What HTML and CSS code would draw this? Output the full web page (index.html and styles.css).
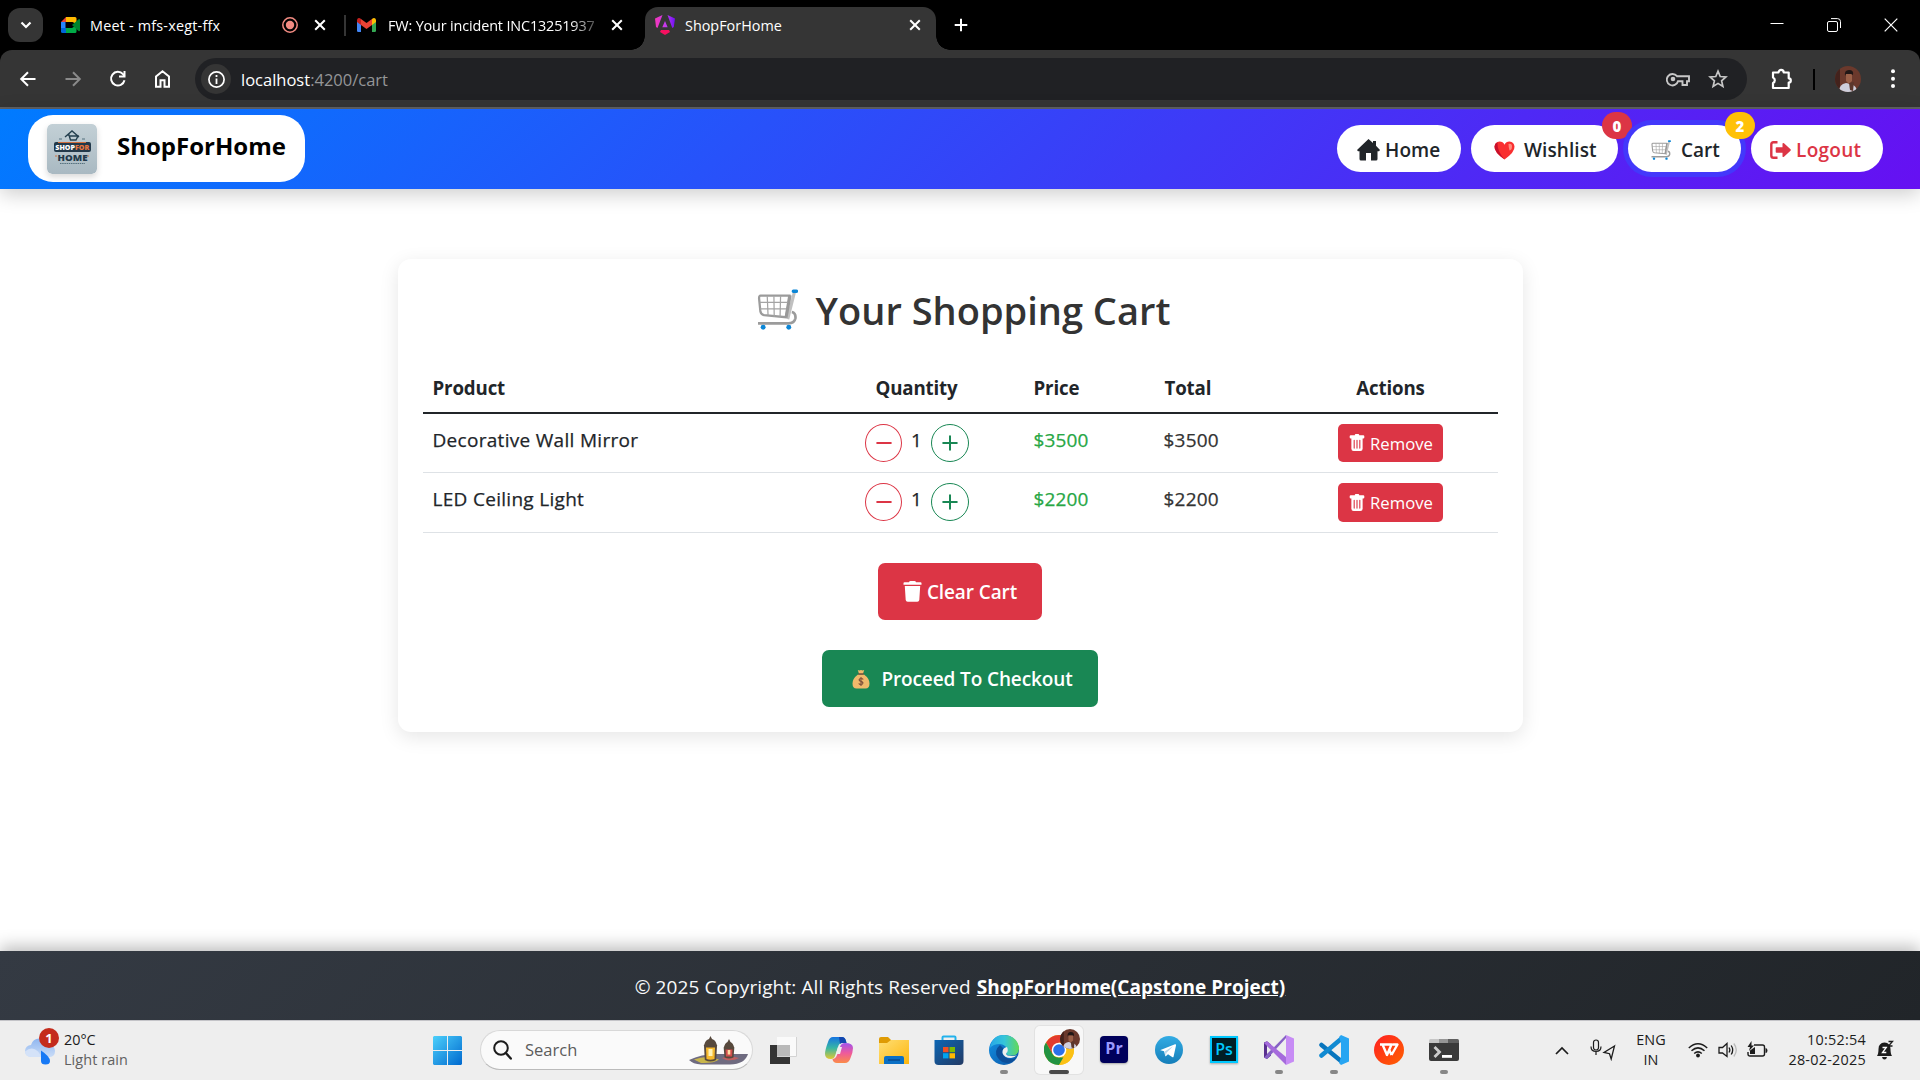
FILE: index.html
```html
<!DOCTYPE html>
<html lang="en">
<head>
<meta charset="utf-8">
<title>ShopForHome</title>
<link rel="stylesheet" href="styles.css">
</head>
<body>
<svg class="defs" aria-hidden="true">
  <defs>
    <symbol id="close" viewBox="0 0 20 20"><path d="M5.2 5.2l9.6 9.6M14.8 5.2l-9.6 9.6" stroke="currentColor" stroke-width="2" fill="none"/></symbol>
    <symbol id="cart" viewBox="0 0 40 40">
      <path d="M3.500 6.500h28l-3.500 21-21-2Q4 25 3.300 22L2 9q0-2.500 1.500-2.500z" fill="#fff" stroke="#9b9b9b" stroke-width="2.200"/>
      <path d="M10 7l.8 19M16.500 7l.3 20M23 7l-.5 20M2.500 13h28M3 19.500h26" stroke="#a4a4a4" stroke-width="1.200" fill="none"/>
      <path d="M36.500 3L30 29.500" stroke="#c0c0c0" stroke-width="3" fill="none"/>
      <path d="M32.500 6L28.500 28" stroke="#999" stroke-width="2.600" fill="none"/>
      <path d="M34 22.500q4 1 3.500 6-1 5-7 5H1" stroke="#9b9b9b" stroke-width="2.600" fill="none"/>
      <path d="M36 .5h2.400a1.700 1.700 0 010 3.400H35.500a1.700 1.700 0 010-3.400z" fill="#0c86d6"/>
      <circle cx="6" cy="37.300" r="2.400" fill="#0c86d6"/><circle cx="31" cy="37.300" r="2.400" fill="#0c86d6"/>
    </symbol>
    <symbol id="trash" viewBox="0 0 16 16"><path fill="#fff" d="M2.500 1a1 1 0 0 0-1 1v1a1 1 0 0 0 1 1H3v9a2 2 0 0 0 2 2h6a2 2 0 0 0 2-2V4h.5a1 1 0 0 0 1-1V2a1 1 0 0 0-1-1H10a1 1 0 0 0-1-1H7a1 1 0 0 0-1 1zm3 4a.5.5 0 0 1 .5.5v7a.5.5 0 0 1-1 0v-7a.5.5 0 0 1 .5-.5M8 5a.5.5 0 0 1 .5.5v7a.5.5 0 0 1-1 0v-7A.5.5 0 0 1 8 5m3 .5v7a.5.5 0 0 1-1 0v-7a.5.5 0 0 1 1 0"/></symbol>
    <symbol id="portrait" viewBox="0 0 26 26">
      <clipPath id="round"><circle cx="13" cy="13" r="13"/></clipPath>
      <g clip-path="url(#round)"><path fill="#6b392c" d="M0 0h26v26H0z"/><path fill="#43221c" d="M0 0h5v26H0z"/><path fill="#cfcfdc" d="M4 26q0-8 7-9l5 1q6 2 6 8z"/><path fill="#9a6048" d="M11 8h6v7l-3 3-3-3z"/><path fill="#211716" d="M10 10q-1-6 4-6t4 5l-2-1h-5z"/><path fill="#5b372c" d="M14 17l5-1-1 9-3-1z"/></g>
    </symbol>
    <linearGradient id="gBlue" x2="1" y2="1"><stop stop-color="#4cd0fb"/><stop offset="1" stop-color="#0069cf"/></linearGradient>
    <linearGradient id="gFolder" x2="1" y2="1"><stop stop-color="#ffdf75"/><stop offset="1" stop-color="#fdb60d"/></linearGradient>
    <linearGradient id="gStore" x2="1" y2="1"><stop stop-color="#0c66b4"/><stop offset="1" stop-color="#233a64"/></linearGradient>
    <linearGradient id="gEdge" x2="1"><stop stop-color="#28a8e8"/><stop offset=".5" stop-color="#35c5d9"/><stop offset="1" stop-color="#63d957"/></linearGradient>
    <linearGradient id="gEdgeB" x2="1" y2="1"><stop stop-color="#1394e6"/><stop offset="1" stop-color="#0b53a4"/></linearGradient>
    <linearGradient id="gCopA" y2="1" x2="0"><stop stop-color="#1674e2"/><stop offset=".5" stop-color="#37b7a4"/><stop offset="1" stop-color="#e3c832"/></linearGradient>
    <linearGradient id="gCopB" y2="1" x2="0"><stop stop-color="#a052ec"/><stop offset=".5" stop-color="#ee5a9c"/><stop offset="1" stop-color="#fb8b48"/></linearGradient>
    <linearGradient id="gTele" y2="1" x2="0"><stop stop-color="#33ace4"/><stop offset="1" stop-color="#157eb9"/></linearGradient>
    <linearGradient id="gWps" x2="1" y2="1"><stop stop-color="#ff1f22"/><stop offset="1" stop-color="#ff6200"/></linearGradient>
    <linearGradient id="gLogo" y2="1" x2="0"><stop stop-color="#c3d0d6"/><stop offset="1" stop-color="#a9b9c2"/></linearGradient>
    <linearGradient id="gNg" x2="1"><stop stop-color="#f637b8"/><stop offset=".55" stop-color="#c13af0"/><stop offset="1" stop-color="#6e10f5"/></linearGradient>
    <linearGradient id="gCloud" y2="1" x2="0"><stop stop-color="#8fb6f0"/><stop offset="1" stop-color="#c9dcf7"/></linearGradient>
  </defs>
</svg>

<header class="browser">
  <div class="tabstrip">
    <button class="tab-search"><svg width="16" height="16" viewBox="0 0 16 16"><path d="M3.500 5.500L8 10l4.500-4.500" stroke="#fff" stroke-width="2.200" fill="none"/></svg></button>
    <div class="tab tab-meet">
      <svg width="20" height="20" viewBox="0 0 20 20"><path fill="#2684fc" d="M0 7h4.500v6H0z"/><path fill="#ea4335" d="M0 7l5-5v5z"/><path fill="#ffba00" d="M5 2h9q1.500 0 1.500 1.500V9l-4-2H5z"/><path fill="#0066da" d="M0 13h5v5H1.500Q0 18 0 16.500z"/><path fill="#00ac47" d="M5 13h6l4.500-3v6.500q0 1.500-1.500 1.500H5z"/><path fill="#00832d" d="M11 10l7-6q1 0 1 1v10.500q-.5 1-1.500.5z"/></svg>
      <span class="tab-title">Meet - mfs-xegt-ffx</span>
      <svg class="rec" width="16" height="16" viewBox="0 0 16 16"><circle cx="8" cy="8" r="7.200" stroke="#f28b82" stroke-width="1.500" fill="none"/><circle cx="8" cy="8" r="4.200" fill="#f28b82"/></svg>
      <svg class="x" width="20" height="20"><use href="#close"/></svg>
    </div>
    <div class="tab tab-mail">
      <svg width="19" height="14" viewBox="0 0 19 14"><path fill="#4285f4" d="M0 2l4 3v9H1.200Q0 14 0 12.800z"/><path fill="#34a853" d="M15 5l4-3v10.800q0 1.200-1.200 1.200H15z"/><path fill="#fbbc04" d="M15 1l1-.7Q18.500-.5 19 2v2l-4 3z"/><path fill="#c5221f" d="M0 2Q.5-.5 3 .3L4 1v6L0 4z"/><path fill="#ea4335" d="M4 1l5.500 4L15 1v6l-5.500 4L4 7z"/></svg>
      <span class="tab-title fade">FW: Your incident INC13251937</span>
      <svg class="x" width="20" height="20"><use href="#close"/></svg>
    </div>
    <div class="tab tab-active">
      <svg width="20" height="20" viewBox="0 0 20 20"><path fill="url(#gNg)" d="M0 3.500L7.500 0 2.500 13 1 12zM12.500 0L20 3.500 18.800 12l-1.500 1zM10 6l2.700 6.300H7.300z"/><path fill="#f6105f" d="M6 15h8l1 2-5 3-5-3z"/></svg>
      <span class="tab-title">ShopForHome</span>
      <svg class="x" width="20" height="20"><use href="#close"/></svg>
    </div>
    <svg class="newtab" width="20" height="20" viewBox="0 0 20 20"><path d="M10 3.700v12.600M3.700 10h12.600" stroke="#fff" stroke-width="2"/></svg>
    <div class="window-controls">
      <svg width="14" height="14" viewBox="0 0 14 14"><path d="M.5 5.500h13" stroke="#fff"/></svg>
      <svg width="14" height="14" viewBox="0 0 14 14"><path d="M.5 5q0-1.500 1.500-1.500h7q1.500 0 1.500 1.500v7q0 1.500-1.500 1.500H2Q.5 13.500.5 12zM4 .6h6.500q3 0 3 3V10" stroke="#fff" fill="none"/></svg>
      <svg width="14" height="14" viewBox="0 0 14 14"><path d="M.7.7l12.600 12.600M13.300.7L.7 13.300" stroke="#fff" stroke-width="1.200"/></svg>
    </div>
  </div>
  <div class="toolbar">
    <div class="toolbar-nav">
      <svg width="20" height="20" viewBox="0 0 20 20"><path d="M17.500 10H3.500M10 3.200L3.200 10l6.800 6.800" stroke="#fff" stroke-width="2" fill="none"/></svg>
      <svg width="20" height="20" viewBox="0 0 20 20"><path d="M2.500 10h14M10 3.200l6.800 6.800-6.800 6.800" stroke="#8a8a8a" stroke-width="2" fill="none"/></svg>
      <svg width="20" height="20" viewBox="0 0 20 20"><path d="M16.500 11.200A6.800 6.800 0 1 1 15 5.200L16.500 7" stroke="#fff" stroke-width="2" fill="none"/><path d="M17.500 2v6.500H11v-2h4.500V2z" fill="#fff"/></svg>
      <svg width="20" height="20" viewBox="0 0 20 20"><path d="M3 7.500L9.500 2.300 16 7.500v10.200h-4.500v-6.500h-4v6.500H3z" stroke="#fff" stroke-width="2" fill="none"/></svg>
    </div>
    <div class="omnibox">
      <span class="site-info"><svg width="17" height="17" viewBox="0 0 17 17"><circle cx="8.500" cy="8.500" r="7.600" stroke="#fff" stroke-width="1.700" fill="none"/><path d="M8.500 7.500V13M8.500 4v2" stroke="#fff" stroke-width="1.800"/></svg></span>
      <span class="url">localhost<span>:4200/cart</span></span>
      <svg class="key" width="24" height="16" viewBox="0 0 24 16"><path d="M11 5.200h12v5h-2V14h-4.500v-3.800H12a5.700 5.700 0 1 1-1-5z" stroke="#c7c7c7" stroke-width="1.900" fill="none"/><circle cx="7" cy="8" r="2.300" fill="#c7c7c7"/></svg>
      <svg class="star" width="20" height="20" viewBox="0 0 20 20"><path d="M10 2.200l2.200 5.300 5.700.5-4.300 3.800 1.300 5.600L10 14.400l-4.900 3 1.300-5.600L2.100 8l5.700-.5z" stroke="#c7c7c7" stroke-width="1.700" fill="none"/></svg>
    </div>
    <svg class="ext" width="22" height="22" viewBox="0 0 22 22"><path d="M2 4.500h5.500a2.600 2.600 0 0 1 5.200 0h5v5.800a2 2 0 0 1 0 4.200v5.500H2v-5a3 3 0 0 0 0-5.500z" stroke="#fff" stroke-width="2.200" fill="none" stroke-linejoin="round"/></svg>
    <span class="toolbar-rule"></span>
    <svg class="profile" width="26" height="26"><use href="#portrait"/></svg>
    <svg class="menu" width="6" height="20" viewBox="0 0 6 20"><g fill="#fff"><circle cx="3" cy="2.300" r="2"/><circle cx="3" cy="9.700" r="2"/><circle cx="3" cy="17" r="2"/></g></svg>
  </div>
</header>

<nav class="navbar">
  <a class="brand">
    <svg class="logo" width="50" height="50" viewBox="0 0 50 50"><rect width="50" height="50" rx="5" fill="url(#gLogo)"/><path d="M18 13l7-6 7 6M20 11h2l1.500 5H29l2-4h-8" stroke="#25404f" stroke-width="1.400" fill="none"/><path d="M12 15h3M35 15h3" stroke="#54707d"/><path d="M8 32h2M40 32h2" stroke="#d06e3c"/><rect x="7" y="18" width="37" height="10" rx="2" fill="#22394a"/><path d="M11 18.500h28" stroke="#d06e3c"/><text x="8.300" y="25.800" font-size="7.200" textLength="34" lengthAdjust="spacingAndGlyphs" fill="#fff">SHOP<tspan fill="#e8763e">FOR</tspan></text><text x="10.500" y="36.800" font-size="9.500" textLength="30" lengthAdjust="spacingAndGlyphs" fill="#22394a">HOME</text><path d="M13 39.500h25" stroke="#54707d" stroke-dasharray="1.500 .7"/></svg>
    <span>ShopForHome</span>
  </a>
  <div class="nav-links">
    <a class="pill home"><svg width="23" height="22" viewBox="0 0 23 22"><path fill="#212529" d="M11.500 0l4.500 4V2h3v4.800l4 4.200-1 1.200h-1.500V20q0 1.500-1.500 1.500h-5V14H9v7.500H4Q2.500 21.500 2.500 20v-7.800H1L0 11z"/></svg><span>Home</span></a>
    <a class="pill wish"><svg width="21" height="19" viewBox="0 0 21 19"><path fill="#f92f30" d="M10.500 18.500Q0 11 .5 5.500 1 .8 5.500.5q3.500 0 5 3.200Q12 .5 15.500.5 20 .8 20.500 5.500q.5 5.500-10 13z"/><path fill="#c8102b" d="M.5 5.500Q0 11 10.500 18.500 3 10 3.500 1.200.8 2.300.5 5.500z"/><path fill="#ff8a7c" d="M14.500 3q3.500-1 3.500 2.500t-2.500 4q-1-3.500-1-6.500z"/></svg><span>Wishlist</span><b class="badge red">0</b></a>
    <a class="pill basket"><svg width="20" height="20"><use href="#cart"/></svg><span>Cart</span><b class="badge amber">2</b></a>
    <a class="pill logout"><svg width="21" height="18" viewBox="0 0 21 18"><path d="M7.500 1.200H3.500q-2.200 0-2.200 2.300v11q0 2.300 2.200 2.300h4" stroke="#dc3545" stroke-width="2.400" fill="none"/><path fill="#dc3545" d="M6.500 6.200h6V2.500q.5-1 1.500-.2l6.500 6q.6.700 0 1.400l-6.500 6q-1 .8-1.500-.2v-3.700h-6q-.8 0-.8-.8V7q0-.8.8-.8z"/></svg><span>Logout</span></a>
  </div>
</nav>

<main class="page">
  <section class="card">
    <h2><svg width="41" height="41"><use href="#cart"/></svg><span>Your Shopping Cart</span></h2>
    <table>
      <colgroup><col class="c-product"><col class="c-wide"><col class="c-price"><col class="c-total"><col class="c-wide"></colgroup>
      <thead><tr><th>Product</th><th class="mid">Quantity</th><th>Price</th><th>Total</th><th class="mid">Actions</th></tr></thead>
      <tbody>
        <tr><td><span class="t-name">Decorative Wall Mirror</span></td>
          <td><div class="qty"><button class="round minus"><svg width="16" height="16" viewBox="0 0 16 16"><path d="M1.200 8h13.600" stroke="currentColor" stroke-width="2" stroke-linecap="round"/></svg></button><span>1</span><button class="round plus"><svg width="16" height="16" viewBox="0 0 16 16"><path d="M1.200 8h13.600M8 1.200v13.600" stroke="currentColor" stroke-width="2" stroke-linecap="round"/></svg></button></div></td>
          <td class="price">$3500</td><td class="total">$3500</td>
          <td class="mid"><button class="remove"><svg width="18" height="18"><use href="#trash"/></svg><span>Remove</span></button></td></tr>
        <tr class="last"><td><span class="t-name">LED Ceiling Light</span></td>
          <td><div class="qty"><button class="round minus"><svg width="16" height="16" viewBox="0 0 16 16"><path d="M1.200 8h13.600" stroke="currentColor" stroke-width="2" stroke-linecap="round"/></svg></button><span>1</span><button class="round plus"><svg width="16" height="16" viewBox="0 0 16 16"><path d="M1.200 8h13.600M8 1.200v13.600" stroke="currentColor" stroke-width="2" stroke-linecap="round"/></svg></button></div></td>
          <td class="price">$2200</td><td class="total">$2200</td>
          <td class="mid"><button class="remove"><svg width="18" height="18"><use href="#trash"/></svg><span>Remove</span></button></td></tr>
      </tbody>
    </table>
    <button class="cta clear"><svg width="19" height="21" viewBox="0 0 19 21"><path fill="#fff" d="M6 1.200Q6.300 0 7.500 0h4q1.200 0 1.500 1.200h4.500q1 0 1 1v1.600H.5V2.200q0-1 1-1zM1.800 5h15.400l-.9 14q-.2 1.800-2 1.800H4.700q-1.800 0-2-1.800z"/></svg><span>Clear Cart</span></button>
    <button class="cta checkout"><svg width="18" height="20" viewBox="0 0 18 20"><path fill="#f0b96b" d="M5.800 1q1.500.8 3.200 0 1.700.8 3.200 0L11 4.800H7zM6 5.500h6q5.500 4 5.500 9 0 5-4 5h-9q-4 0-4-5 0-5 5.500-9z"/><path d="M6.200 5h5.600" stroke="#7d4d3a" stroke-width="1.400"/><path d="M11.200 10.500Q10.800 9.500 9 9.500t-1.900 1.400Q7.300 12 9 12.400t2 1.600q-.2 1.500-2 1.500t-2.200-1.200M9 8v9" stroke="#7d4d3a" stroke-width="1.100" fill="none"/></svg><span>Proceed To Checkout</span></button>
  </section>
</main>

<footer class="footer"><span class="copy">© 2025 Copyright: All Rights Reserved</span><a>ShopForHome(Capstone Project)</a></footer>

<div class="taskbar">
  <div class="weather">
    <svg width="35" height="34" viewBox="0 0 35 34"><path fill="url(#gCloud)" d="M6 24a6 6 0 0 1 0-12Q8 5 15 5.500q6 .5 8 6.500 7 0 7 6t-6 6z"/><path fill="#d4e2f8" d="M6 24q-6-.5-6-5.500 7-6 13 0l4 5.500z"/><path fill="#1779f5" d="M16 17.500q9 6 9 10.500 0 3.500-4.500 3.500T16 28z"/></svg>
    <b class="alert">1</b>
    <div class="weather-text"><span>20°C</span><span class="cond">Light rain</span></div>
  </div>
  <svg class="start" width="29" height="29" viewBox="0 0 29 29"><path fill="url(#gBlue)" d="M1 0h13v14H0V1zM15 0h13l1 1v13H15zM0 15h14v14H1l-1-1zM15 15h14v13l-1 1H15z"/></svg>
  <div class="search">
    <svg width="19" height="20" viewBox="0 0 19 20"><circle cx="8" cy="8" r="6.800" stroke="#1c1c1c" stroke-width="2" fill="none"/><path d="M12.800 13l5 5.500" stroke="#1c1c1c" stroke-width="2.400" stroke-linecap="round"/></svg>
    <span>Search</span>
    <svg class="lanterns" width="59" height="30" viewBox="0 0 59 30"><path fill="#6f6b80" d="M0 25q12-6 28-6h31q-3 10-18 10.500H12Q4 29 0 25z"/><path fill="#c9b64b" d="M5 24.500q13-5 25 0-5 4-18 3.500z"/><path fill="#c1605f" d="M33 23q8-3 17 0-5 3-13 2z"/><path fill="#57493d" d="M15.500 9q1-4 4.500-5l1.500-3L23 4q3.500 1 4.500 5l.8 2H14.700zM15 11h13l-.8 14q-5.700 3-11.400 0zM35 12q1-4 3.500-5L40 4l1.500 3q2.500 1 3.500 5l.5 1h-11zM34.700 13h10.600l-.8 9.500q-4.500 2-9 0z"/><path fill="#f6b92e" d="M17 12.500h9L25.500 24q-4 1.500-8 0z"/><path fill="#fff2b8" d="M19.500 14h4v7h-4z"/><path fill="#cf4d4d" d="M36.500 14.500h7L43 21.500h-6z"/><path fill="#ffd9a0" d="M38.700 15h2.600v4.500h-2.600z"/></svg>
  </div>
  <div class="apps">
    <span class="app"><svg width="30" height="30" viewBox="0 0 30 30"><path fill="#343434" d="M1 10h20v19H1z"/><path fill="#fafafa" d="M8 2h20v20H8z"/><path fill="#b9b9b9" d="M8 10h13v12H8z"/><path d="M8 21.500h19.500V2" stroke="#d3d3d3" fill="none"/></svg></span>
    <span class="app"><svg width="30" height="30" viewBox="0 0 30 30"><path fill="url(#gCopA)" d="M9 2h9q3 0 4 4l.5 2H18q-3 0-4 4l-3 9q-1 3-4 3-6 0-6-5 0-4 3-12Q5.500 2 9 2z"/><path fill="#1246ae" d="M15 2h3q3 0 4 4l.5 2H18q-1 0-2 1z"/><path fill="url(#gCopB)" d="M21 28h-8q-4 0-4.500-4 3 0 4.500-4l3-8q1-4 5-4 8 0 8 5 0 4-2.500 10-1.500 5-5.500 5z"/><path fill="#eee" d="M14 12h4l-2 7h-4z"/></svg></span>
    <span class="app"><svg width="30" height="30" viewBox="0 0 30 30"><path fill="#df9b04" d="M0 4q0-2 2-2h7l3 3v7H0z"/><path fill="url(#gFolder)" d="M0 8h8l4-3h18v24H0z"/><path fill="#0b70c5" d="M5 29v-6q0-2 2-2h16q2 0 2 2v6z"/><path d="M9 25h12" stroke="#084a8e" stroke-width="1.500"/></svg></span>
    <span class="app"><svg width="30" height="30" viewBox="0 0 30 30"><path d="M8.500 7V2.500q0-1 1-1h11q1 0 1 1V7" stroke="#22b2ec" stroke-width="2" fill="none"/><path fill="url(#gStore)" d="M.5 5h29v21q0 4-4 4h-21q-4 0-4-4z"/><path fill="#f25022" d="M9 12h5.500v5.200H9z"/><path fill="#7fba00" d="M15.500 12H21v5.200h-5.500z"/><path fill="#00a4ef" d="M9 18.200h5.500v5.200H9z"/><path fill="#ffb900" d="M15.500 18.200H21v5.200h-5.500z"/></svg></span>
    <span class="app open"><svg width="30" height="30" viewBox="0 0 30 30"><circle cx="15" cy="15" r="15" fill="url(#gEdgeB)"/><path fill="url(#gEdge)" d="M1 13Q3 0 15 0q13 1 15 12 .5 8-7 8.500-5 0-6-2 2-2 1-5-2-4-7-4.500Q4 9 1 13z"/><path fill="#0c4e99" d="M11 10q-7 6-2 13 5 7 14 4 3-2 4.500-4-5 2.500-11-.5-5-4-2-9z"/><path fill="#eee" d="M18 12q2 4-1 6.500 0 2.500 6 2.500 4 0 5-1-2 2.500-6 3-7 0-8.500-5-.5-5 4.500-6z"/></svg></span>
    <span class="app active"><svg width="30" height="30" viewBox="0 0 30 30"><circle cx="15" cy="15" r="15" fill="#fbc116"/><path fill="#e33b2e" d="M2 7.500Q6.500 0 15 0q8.500 0 13 7.500H15L8.500 19z"/><path fill="#229342" d="M2 7.500L8.500 19q2.500 4 6.500 3.500h6.500L15 30Q6 30 1.800 22T2 7.500z"/><path fill="#fbc116" d="M28 7.500q4 7.500 0 15T15 30l6.500-11.300Q23.500 15 21.500 11L19 7.500z"/><circle cx="15" cy="15" r="7.300" fill="#fff"/><circle cx="15" cy="15" r="5.800" fill="#2b70e9"/></svg><svg class="mini" width="20" height="20" viewBox="0 0 26 26"><use href="#portrait"/></svg></span>
    <span class="app"><span class="tile pr">Pr</span></span>
    <span class="app"><svg width="28" height="28" viewBox="0 0 28 28"><circle cx="14" cy="14" r="14" fill="url(#gTele)"/><path fill="#fff" d="M5.500 14L20 8.300q1.300-.3 1 1.200l-2.400 11q-.3 1.300-1.500.6L13 18.200l-2.200 2q-.5.500-.7-.6l-1-4.300-3.500-1q-.8-.1-.1-.3z"/><path fill="#b5d6ea" d="M10 15.300l8-5-6.500 6.500-.8 3.500z"/></svg></span>
    <span class="app"><span class="tile ps">Ps</span></span>
    <span class="app open"><svg width="30" height="30" viewBox="0 0 30 30"><path fill="#59308f" d="M0 7.500l3-1.300 4 3.300v11L3 24l-3-1.500z"/><path fill="#8661c5" d="M0 22.500L3 24 22 3V0zM3 11v8l4-4z"/><path fill="#a56bdc" d="M3 6.200L22 22v8L0 8z"/><path fill="#c78cf5" d="M22 0l8 3.500v23L22 30z"/><path fill="#eee" d="M22 9.500v11L15 15zM3 11l4 4-4 4z"/></svg></span>
    <span class="app open"><svg width="30" height="30" viewBox="0 0 30 30"><path d="M2.500 10L22 26" stroke="#0875bd" stroke-width="4.500" stroke-linecap="round"/><path d="M2.500 20.500L22 4" stroke="#118ad2" stroke-width="4.500" stroke-linecap="round"/><path fill="#27a5f2" d="M22 0l8 3.500v23L22 30l-2-2 2-6V8l-2-6z"/></svg></span>
    <span class="app"><svg width="30" height="30" viewBox="0 0 30 30"><circle cx="15" cy="15" r="15" fill="url(#gWps)"/><path d="M6 9.500h11.500l-4.500 10.500L8.500 9.500M17.500 20l-2-4.500M17.500 20L23.500 9.500H18.500" stroke="#fff" stroke-width="2.400" fill="none" stroke-linejoin="round"/></svg></span>
    <span class="app open"><svg width="30" height="30" viewBox="0 0 30 30"><path fill="#3a3a3a" d="M0 8h30v16q0 2-2 2H2q-2 0-2-2z"/><path fill="#c6c6c6" d="M0 8V5.500Q0 4 1.500 4H10v4z"/><path fill="#969696" d="M10 4h9v4h-9z"/><path fill="#5f5f5f" d="M19 4h9.500Q30 4 30 5.500V8H19z"/><path d="M5.500 12l5 5-5 5" stroke="#ccc" stroke-width="2.800" fill="none"/><path fill="#fff" d="M13 20h10v2.800H13z"/></svg></span>
  </div>
  <div class="tray">
    <svg width="14" height="9" viewBox="0 0 14 9"><path d="M1 8l6-6 6 6" stroke="#1c1c1c" stroke-width="1.700" fill="none"/></svg>
    <svg class="mic" width="26" height="22" viewBox="0 0 26 22"><rect x="3.500" y="1" width="5" height="10" rx="2.500" stroke="#1c1c1c" fill="none" stroke-width="1.200"/><path d="M1 7.500q0 5 5 5t5-5M6 12.500V16" stroke="#1c1c1c" stroke-width="1.200" fill="none"/><path d="M24.500 7L14 13.500l5.500 1.200 1.700 5.300z" stroke="#1c1c1c" stroke-width="1.300" fill="none"/></svg>
    <div class="lang"><span>ENG</span><span>IN</span></div>
    <svg class="wifi" width="20" height="16" viewBox="0 0 20 16"><g stroke="#1c1c1c" stroke-width="1.500" fill="none"><path d="M.8 6q9.200-8.500 18.400 0M3.500 8.800q6.500-5.800 13 0M6.200 11.500q3.800-3.300 7.600 0"/></g><circle cx="10" cy="13.500" r="1.900" fill="#1c1c1c"/></svg>
    <svg class="vol" width="20" height="18" viewBox="0 0 20 18"><path d="M1 6.500h3.500L9 2.500v13L4.500 12H1z" stroke="#1c1c1c" stroke-width="1.300" fill="none"/><path d="M11 6.500q1.700 2.500 0 5M13.200 4.500q3 4.500 0 9" stroke="#1c1c1c" stroke-width="1.300" fill="none"/><path d="M15.800 2.500q5 6.500 0 13" stroke="#bbb" stroke-width="1.300" fill="none"/></svg>
    <svg class="bat" width="21" height="18" viewBox="0 0 21 18"><path d="M7 4h8.500q2 0 2 2v7q0 2-2 2H3q-2 0-2-2v-2" stroke="#1c1c1c" stroke-width="1.400" fill="none"/><path fill="#1c1c1c" d="M3 13V9.500L8 6v7zM18.500 7q2 0 2 2.500t-2 2.500zM4.500 0L.5 6H3l-1 4 5-5.500H4.500z"/></svg>
    <div class="clock"><span>10:52:54</span><span>28-02-2025</span></div>
    <svg class="bell" width="18" height="21" viewBox="0 0 18 21"><path fill="#1c1c1c" d="M1 16q1.500-2 1.500-7 0-6 6-6.500 6 .5 6 6.500 0 5 1.500 7zM6 17h5q-.5 2.500-2.500 2.500T6 17z"/><path d="M6.500 7.500h3.800l-3.800 5h3.800" stroke="#fff" stroke-width="1.300" fill="none"/><path d="M12.500 1.500h4l-4 4.500h4" stroke="#1c1c1c" stroke-width="1.300" fill="none"/></svg>
  </div>
</div>
</body>
</html>
```

FILE: styles.css
```css
* { box-sizing: border-box; }
body { margin: 0; width: 1920px; height: 1080px; overflow: hidden; display: flex; flex-direction: column; font-family: "Open Sans", "Noto Sans", sans-serif; font-size: 19px; line-height: 30px; color: #212529; background: #fff; }
button { font: inherit; border: 0; padding: 0; }
svg { flex: none; display: block; }
span { white-space: nowrap; }
.defs { position: absolute; width: 0; height: 0; }

.browser { flex: none; background: #000; }
.tabstrip { height: 50px; display: flex; align-items: center; padding-left: 8px; color: #fff; font-size: 14.4px; line-height: 20px; }
.tab-search { width: 35px; height: 34px; border-radius: 12px; background: #353535; display: flex; align-items: center; justify-content: center; }
.tab { display: flex; align-items: center; height: 43px; }
.tab-title { flex: 1; overflow: hidden; margin-top: 1px; }
.tab-meet { width: 300px; padding: 0 13px 0 18px; gap: 9px; }
.tab-meet .tab-title { letter-spacing: .2px; }
.tab-meet .x { margin-left: 3px; }
.tab-mail { width: 302px; padding: 0 17px 0 13px; gap: 12px; position: relative; }
.tab-mail::before { content: ""; width: 2px; height: 21px; background: #353535; margin-left: -12px; margin-right: -1px; }
.fade { flex: none; width: 209px; margin-right: -2px; letter-spacing: -.14px; -webkit-mask-image: linear-gradient(90deg, #000 87%, transparent 104%); mask-image: linear-gradient(90deg, #000 87%, transparent 104%); }
.tab-active { width: 291px; background: #353535; border-radius: 13px 13px 0 0; align-self: flex-end; padding: 0 11px 7px 10px; gap: 10px; position: relative; }
.tab-active::before, .tab-active::after { content: ""; position: absolute; bottom: 0; width: 14px; height: 14px; }
.tab-active::before { left: -14px; background: radial-gradient(circle at 0 0, transparent 13.5px, #353535 14px); }
.tab-active::after { right: -14px; background: radial-gradient(circle at 100% 0, transparent 13.5px, #353535 14px); }
.newtab { margin-left: 15px; }
.window-controls { margin-left: auto; width: 172px; display: flex; justify-content: space-around; }
.toolbar { height: 59px; background: #353535; border-bottom: 2px solid #606164; border-radius: 12px 12px 0 0; display: flex; align-items: center; padding: 1px 0 0 18px; }
.toolbar-nav { display: flex; gap: 25px; width: 177px; }
.omnibox { width: 1552px; height: 42px; border-radius: 21px; background: #202124; display: flex; align-items: center; padding: 0 19px 0 6px; }
.site-info { width: 30px; height: 30px; border-radius: 50%; background: #353535; display: flex; align-items: center; justify-content: center; }
.url { flex: 1; margin: 2px 0 0 10px; font-size: 16.5px; color: #fff; }
.url span { color: #959698; }
.key { margin-right: 18px; }
.ext { margin-left: 24px; }
.toolbar-rule { width: 2px; height: 21px; background: #000; margin: 0 20px 0 20px; }
.menu { margin-left: 29px; }

.navbar { flex: none; height: 80px; background: linear-gradient(135deg, #007bff, #6610f2); box-shadow: 0 5px 19px rgba(0,0,0,.2); display: flex; justify-content: space-between; padding: 0 37px 0 28px; z-index: 1; }
.brand { margin-top: 6px; width: 277px; height: 67px; border-radius: 25px; background: #fff; display: flex; align-items: center; padding-left: 19px; gap: 20px; color: #000; font-size: 24px; font-weight: 700; }
.brand span { margin-top: -5px; }
.logo { border-radius: 5px; box-shadow: 0 3px 6px rgba(0,0,0,.15); font-weight: 800; }
.nav-links { display: flex; gap: 10px; margin-top: 16px; }
.pill { position: relative; height: 47px; border-radius: 24px; background: #fff; display: flex; align-items: center; font-weight: 600; padding-left: 20px; padding-top: 3px; }
.home { width: 124px; gap: 5px; letter-spacing: .1px; }
.wish { width: 147px; padding-left: 23px; gap: 9px; letter-spacing: .1px; }
.basket { width: 113px; padding-left: 23px; gap: 10px; box-shadow: 0 0 0 5px #4338fb; }
.logout { width: 132px; gap: 5px; padding-left: 19px; color: #dc3545; letter-spacing: .3px; }
.badge { position: absolute; top: -13px; right: -14px; width: 30px; height: 27px; border-radius: 14px; color: #fff; font-size: 15px; line-height: 28px; text-align: center; letter-spacing: 0; }
.red { background: #dc3545; }
.amber { background: #ffc107; }

.page { flex: 1; display: flex; justify-content: center; align-items: flex-start; padding-top: 70px; }
.card { width: 1125px; height: 473px; border-radius: 13px; padding: 25px; box-shadow: 0 5px 19px rgba(0,0,0,.1); display: flex; flex-direction: column; align-items: center; background: #fff; }
h2 { margin: 0 0 30px; padding: 3px 0 0 7px; height: 48px; font-size: 38px; font-weight: 600; color: #333; display: flex; align-items: center; gap: 18px; line-height: 48px; }
table { width: 1075px; table-layout: fixed; border-spacing: 0; margin-bottom: 30px; }
.c-product { width: 387px; } .c-wide { width: 214px; } .c-price { width: 131px; } .c-total { width: 129px; }
th, td { padding: 11px 10px 0; text-align: left; vertical-align: top; }
th { height: 52px; border-bottom: 2px solid #212529; font-weight: 700; font-size: 18.700px; letter-spacing: -.15px; }
td { height: 59px; padding-top: 10px; border-bottom: 1px solid #dee2e6; }
.last td { height: 60px; }
th.mid, td.mid { text-align: center; }
.t-name, .price, .total, .qty { font-weight: 500; }
.t-name { display: block; margin-top: 1px; letter-spacing: .3px; -webkit-text-stroke: .25px; }
td.price, td.total { padding-top: 11px; -webkit-text-stroke: .25px; }
.price { color: #28a745; letter-spacing: .15px; }
td.total { color: #333; padding-left: 9px; letter-spacing: .2px; }
.qty { display: flex; justify-content: center; gap: 9px; padding-left: 1px; }
.qty span { margin-top: 1px; -webkit-text-stroke: .25px; }
.round { width: 38px; height: 38px; border-radius: 50%; border: 1px solid; background: #fff; display: flex; align-items: center; justify-content: center; }
.minus { color: #dc3545; width: 37px; }
.plus { color: #198754; }
.remove { width: 105px; height: 38px; border-radius: 5px; background: #dc3545; color: #fff; font-size: 16.7px; display: inline-flex; align-items: center; justify-content: center; gap: 4px; vertical-align: top; }
.last .remove { height: 39px; }
.remove span { padding-top: 1px; }
.cta { height: 57px; border-radius: 7px; color: #fff; font-weight: 600; display: flex; align-items: center; justify-content: center; flex: none; }
.clear { width: 164px; background: #dc3545; gap: 5px; margin-bottom: 30px; letter-spacing: -.1px; }
.checkout { width: 276px; background: #198754; gap: 11px; padding-left: 5px; letter-spacing: -.12px; }

.footer { flex: none; height: 69px; padding-top: 2px; background: linear-gradient(135deg, #343a43, #212529); box-shadow: 0 -5px 15px rgba(0,0,0,.25); color: #f8f9fa; display: flex; align-items: center; justify-content: center; gap: 6px; }
.copy { letter-spacing: .1px; }
.footer a { color: #fff; font-weight: 700; text-decoration: underline; letter-spacing: .03px; }

.taskbar { position: relative; flex: none; height: 60px; background: #eee; border-top: 1px solid #c4c4c8; display: flex; align-items: center; font-size: 14.4px; line-height: 20px; color: #1c1c1c; padding-bottom: 1px; }
.weather { position: relative; width: 433px; display: flex; align-items: center; padding-left: 25px; gap: 4px; }
.weather-text, .lang, .clock { display: flex; flex-direction: column; margin-top: -1px; }
.cond { color: #606060; letter-spacing: .1px; }
.alert { position: absolute; left: 39px; top: -3px; width: 20px; height: 20px; border-radius: 50%; background: #c42b1c; color: #fff; font-size: 13px; text-align: center; }
.search { margin-left: 18px; width: 273px; height: 40px; border: 1px solid #d8d8d8; border-bottom-color: #bbb; border-radius: 20px; background: #fafafa; display: flex; align-items: center; padding: 0 4px 0 12px; font-size: 16.5px; color: #5c5c5c; }
.search span { margin-left: 13px; }
.lanterns { margin-left: auto; }
.apps { display: flex; gap: 7px; margin-left: 7px; }
.app { position: relative; width: 48px; height: 48px; display: flex; align-items: center; justify-content: center; border-radius: 5px; }
.open::after, .active::after { content: ""; position: absolute; bottom: 0; width: 8px; height: 4px; border-radius: 2px; background: #868686; }
.active { background: #f8f8f8; box-shadow: 0 0 0 1px #e2e2e2; }
.active::after { width: 20px; background: #4a4a4a; }
.mini { position: absolute; right: 3px; top: 3px; }
.tile { width: 28px; height: 27px; font-weight: 700; font-size: 16px; line-height: 25px; text-align: center; margin-top: -2px; box-shadow: 0 1px 2px rgba(0,0,0,.3); }
.pr { background: #00005b; color: #9999ff; border-radius: 4px; }
.ps { background: #001e26; color: #00c8ff; border: 2px solid #00c8ff; font-weight: 600; line-height: 22px; }
.tray { margin-left: auto; display: flex; align-items: center; padding-right: 26px; }
.mic { margin-left: 21px; }
.lang { margin-left: 19px; width: 32px; align-items: center; }
.wifi { margin-left: 21px; }
.vol { margin-left: 10px; }
.bat { margin-left: 9px; }
.clock { margin-left: 19px; width: 79px; text-align: right; align-items: flex-end; letter-spacing: .25px; }
.bell { margin-left: 10px; }
```
